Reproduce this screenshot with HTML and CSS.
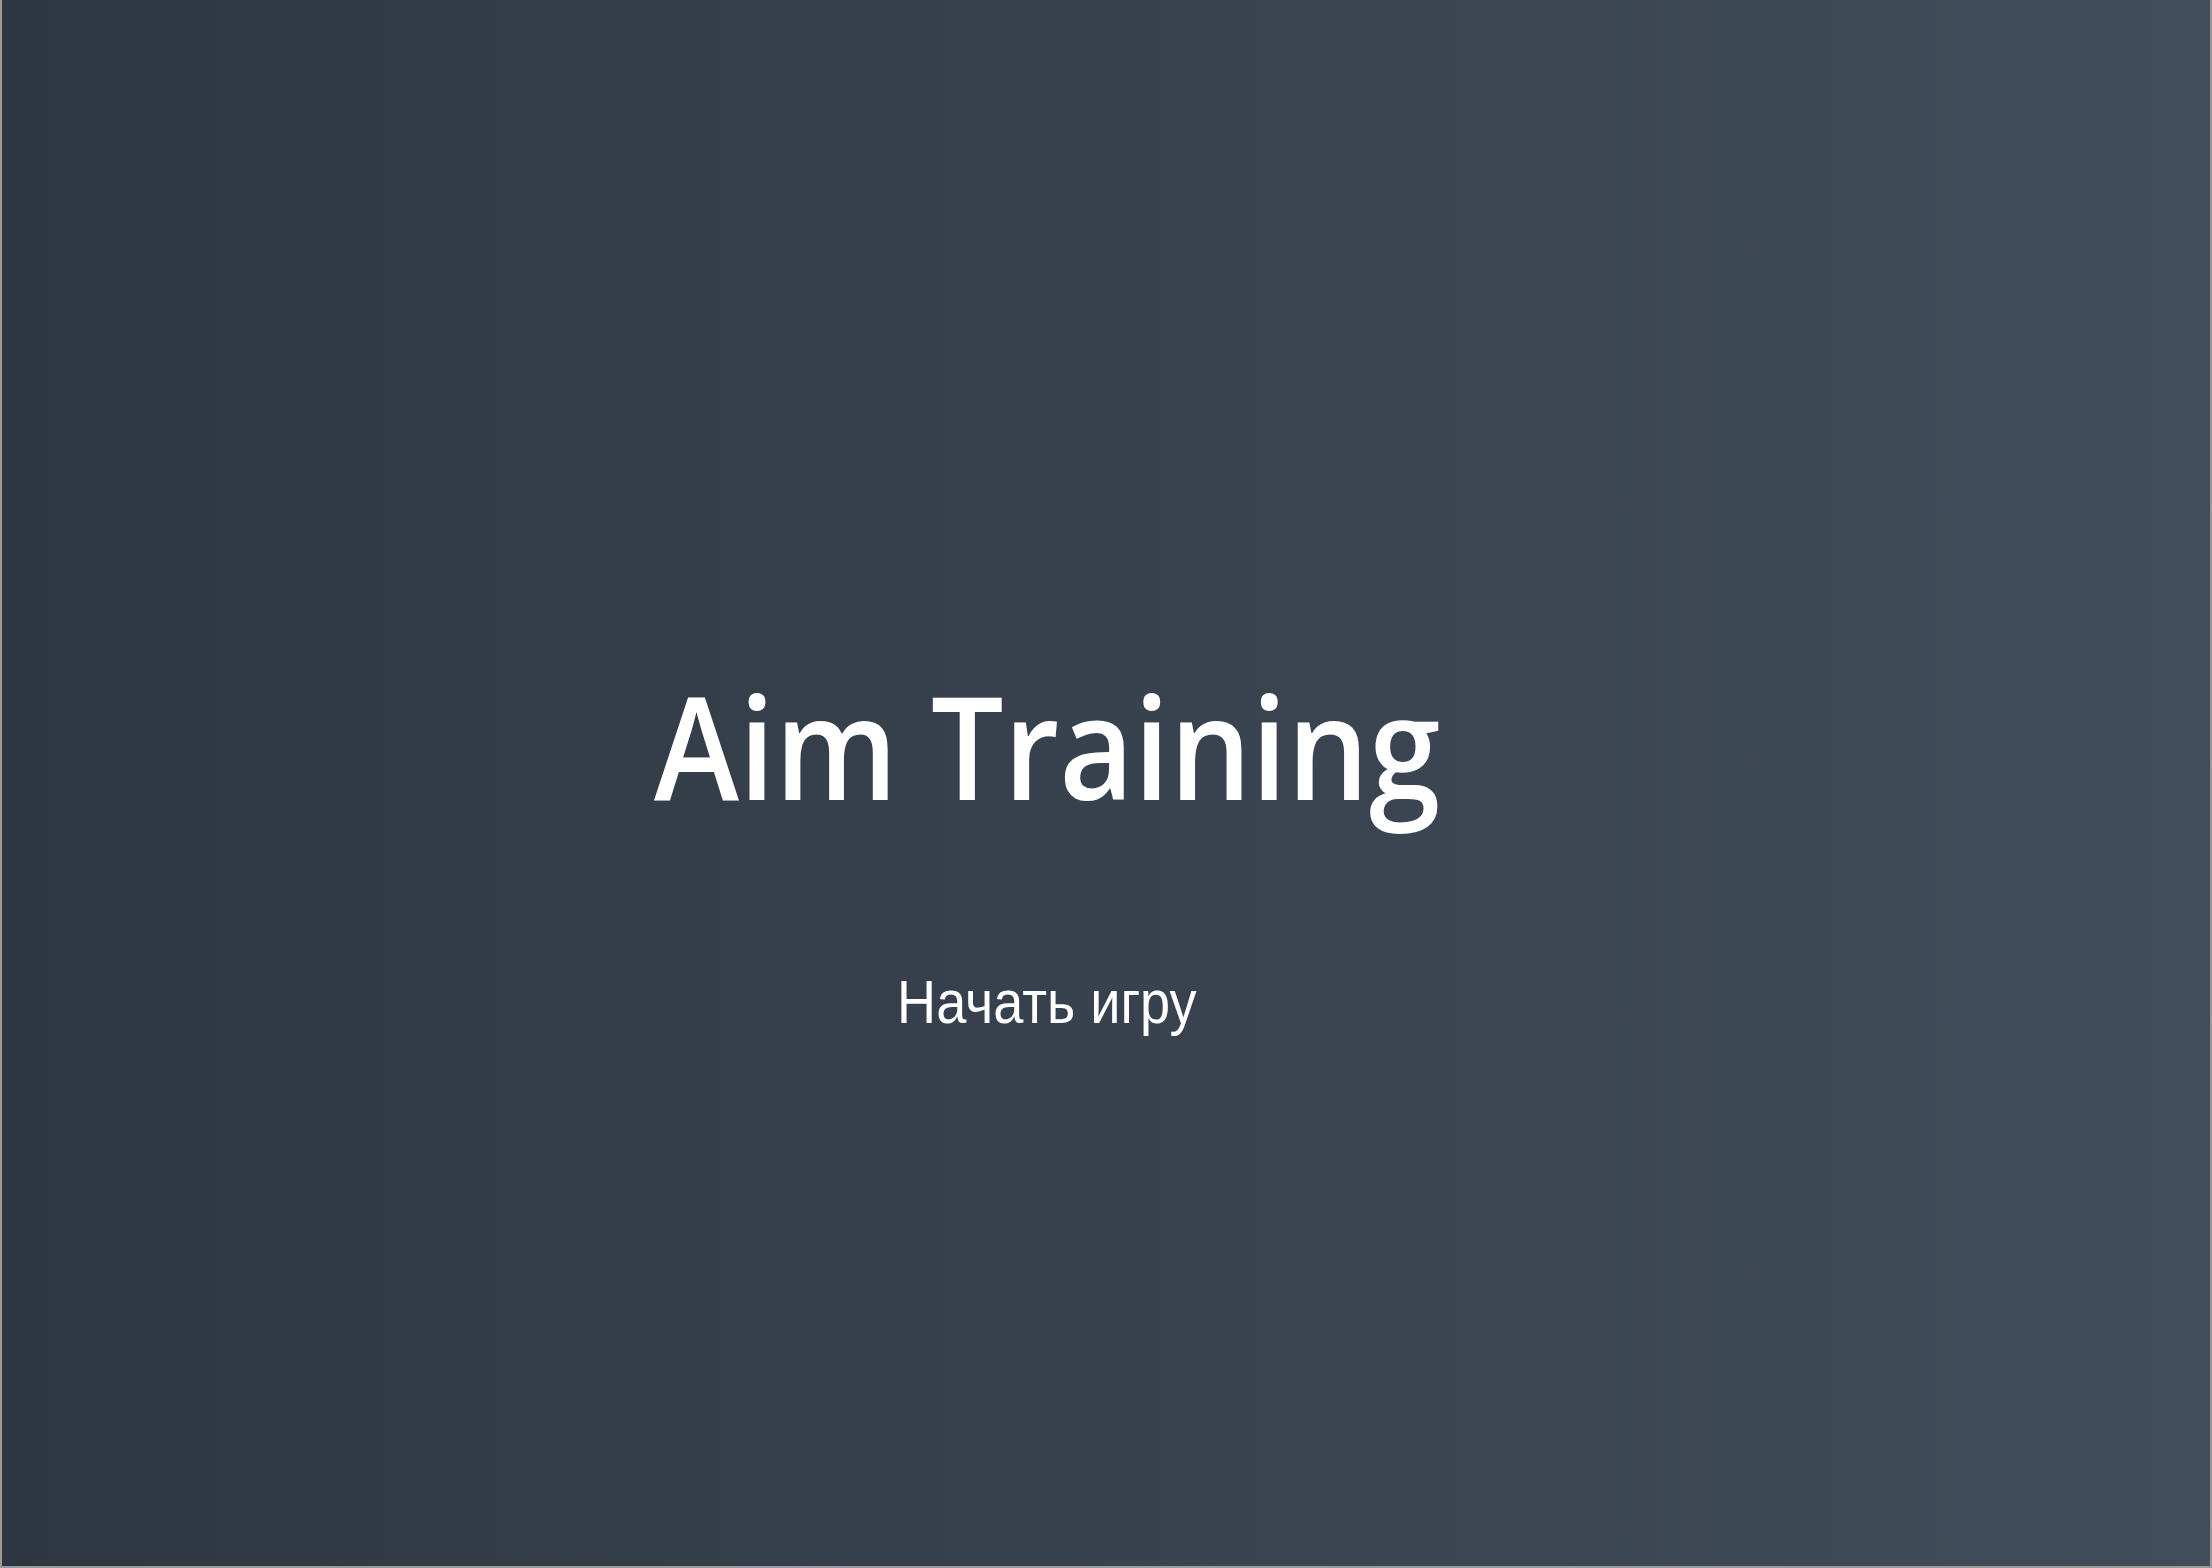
FILE: index.html
```html
<!DOCTYPE html>
<html lang="ru">
<head>
<meta charset="utf-8">
<title>Aim Training</title>
<link rel="stylesheet" href="styles.css">
</head>
<body>
<div class="screen">
  <h1 class="title">Aim Training</h1>
  <button class="start">Начать игру</button>
</div>
</body>
</html>
```
FILE: styles.css
```css
html, body {
  margin: 0;
  padding: 0;
  height: 100%;
}
body {
  background: #9a9a9a;
}
.screen {
  box-sizing: border-box;
  margin: 0 2px 2px 2px;
  height: calc(100vh - 2px);
  padding-top: 129px;
  padding-right: 118px;
  background: linear-gradient(to right, #2e3741, #424d5b);
  display: flex;
  flex-direction: column;
  align-items: center;
  justify-content: center;
}
.title {
  margin: 0;
  font-family: "Open Sans", sans-serif;
  font-weight: 600;
  font-size: 144px;
  line-height: 1.2;
  color: #ffffff;
  transform: scaleX(0.893);
}
.start {
  margin-top: 137px;
  background: transparent;
  border: none;
  color: #ffffff;
  font-family: "Liberation Sans", Arial, sans-serif;
  font-size: 61px;
  padding: 0;
  cursor: pointer;
  transform: scaleX(0.887);
}
```
